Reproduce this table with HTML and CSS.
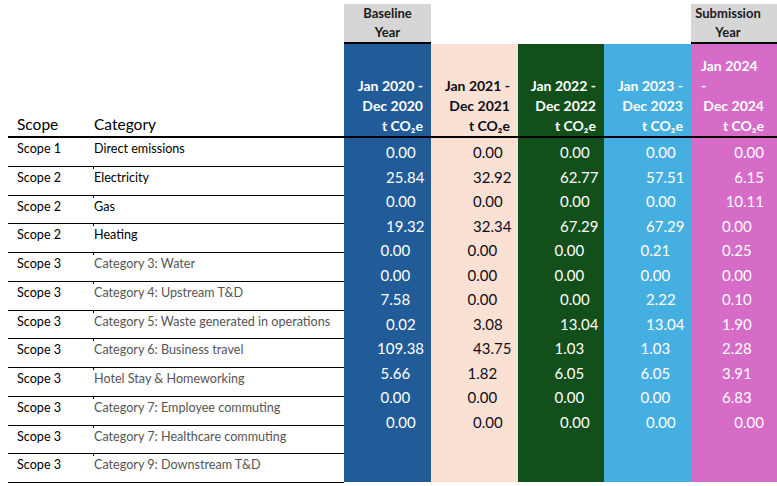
FILE: index.html
```html
<!DOCTYPE html>
<html>
<head>
<meta charset="utf-8">
<link rel="stylesheet" href="styles.css">
</head>
<body>
<div class="sheet">
  <div class="left">
    <div class="lhead">
      <div class="c-scope h">Scope</div>
      <div class="c-cat h">Category</div>
    </div>
    <div class="row first"><div class="c-scope">Scope 1</div><div class="c-cat">Direct emissions</div></div>
    <div class="row"><div class="c-scope">Scope 2</div><div class="c-cat">Electricity</div></div>
    <div class="row"><div class="c-scope">Scope 2</div><div class="c-cat">Gas</div></div>
    <div class="row"><div class="c-scope">Scope 2</div><div class="c-cat">Heating</div></div>
    <div class="row"><div class="c-scope">Scope 3</div><div class="c-cat grey">Category 3: Water</div></div>
    <div class="row"><div class="c-scope">Scope 3</div><div class="c-cat grey">Category 4: Upstream T&amp;D</div></div>
    <div class="row"><div class="c-scope">Scope 3</div><div class="c-cat grey">Category 5: Waste generated in operations</div></div>
    <div class="row"><div class="c-scope">Scope 3</div><div class="c-cat grey">Category 6: Business travel</div></div>
    <div class="row"><div class="c-scope">Scope 3</div><div class="c-cat grey">Hotel Stay &amp; Homeworking</div></div>
    <div class="row"><div class="c-scope">Scope 3</div><div class="c-cat grey">Category 7: Employee commuting</div></div>
    <div class="row"><div class="c-scope">Scope 3</div><div class="c-cat grey">Category 7: Healthcare commuting</div></div>
    <div class="row last"><div class="c-scope">Scope 3</div><div class="c-cat grey">Category 9: Downstream T&amp;D</div></div>
  </div>

  <div class="col w87">
    <div class="col-top gray">Baseline<br>Year</div>
    <div class="col-body blue">
      <div class="col-head"><div>Jan 2020 -</div><div>Dec 2020</div><div>t CO₂e</div></div>
      <div class="vals">
        <div class="a">0.00</div><div class="a">25.84</div><div class="a">0.00</div><div class="a">19.32</div>
        <div class="b">0.00</div><div class="b">0.00</div><div class="b">7.58</div><div class="a">0.02</div>
        <div class="wide">109.38</div><div class="b">5.66</div><div class="b">0.00</div><div class="a">0.00</div>
      </div>
    </div>
  </div>

  <div class="col w87">
    <div class="col-top"></div>
    <div class="col-body peach">
      <div class="col-head"><div>Jan 2021 -</div><div>Dec 2021</div><div>t CO₂e</div></div>
      <div class="vals">
        <div class="a">0.00</div><div class="a">32.92</div><div class="a">0.00</div><div class="a">32.34</div>
        <div class="b">0.00</div><div class="b">0.00</div><div class="b">0.00</div><div class="a">3.08</div>
        <div class="a">43.75</div><div class="b">1.82</div><div class="b">0.00</div><div class="a">0.00</div>
      </div>
    </div>
  </div>

  <div class="col w86">
    <div class="col-top"></div>
    <div class="col-body green">
      <div class="col-head"><div>Jan 2022 -</div><div>Dec 2022</div><div>t CO₂e</div></div>
      <div class="vals">
        <div class="a">0.00</div><div class="a">62.77</div><div class="a">0.00</div><div class="a">67.29</div>
        <div class="b">0.00</div><div class="b">0.00</div><div class="a">0.00</div><div class="a">13.04</div>
        <div class="b">1.03</div><div class="b">6.05</div><div class="b">0.00</div><div class="a">0.00</div>
      </div>
    </div>
  </div>

  <div class="col w87">
    <div class="col-top"></div>
    <div class="col-body lblue">
      <div class="col-head"><div>Jan 2023 -</div><div>Dec 2023</div><div>t CO₂e</div></div>
      <div class="vals">
        <div class="a">0.00</div><div class="a">57.51</div><div class="a">0.00</div><div class="a">67.29</div>
        <div class="b">0.21</div><div class="b">0.00</div><div class="a">2.22</div><div class="a">13.04</div>
        <div class="b">1.03</div><div class="b">6.05</div><div class="b">0.00</div><div class="a">0.00</div>
      </div>
    </div>
  </div>

  <div class="col w86">
    <div class="col-top gray sub">Submission<br>Year</div>
    <div class="col-body magenta">
      <div class="col-head"><div class="hl">Jan 2024</div><div class="hl">-</div><div>Dec 2024</div><div>t CO₂e</div></div>
      <div class="vals">
        <div class="r">0.00</div><div class="r">6.15</div><div class="r">10.11</div><div class="m">0.00</div>
        <div class="m">0.25</div><div class="m">0.00</div><div class="m">0.10</div><div class="m">1.90</div>
        <div class="m">2.28</div><div class="m">3.91</div><div class="m">6.83</div><div class="r">0.00</div>
      </div>
    </div>
  </div>
</div>
</body>
</html>
```

FILE: styles.css
```css
html, body {
  margin: 0;
  padding: 0;
  background: #ffffff;
}
body {
  font-family: Lato, "Liberation Sans", sans-serif;
  color: #000000;
}
.sheet {
  display: flex;
  width: 777px;
  padding-top: 4px;
}
.left {
  width: 344px;
  padding-left: 8px;
  box-sizing: border-box;
  display: flex;
  flex-direction: column;
}
.lhead {
  height: 132px;
  border-bottom: 2px solid #000;
  display: flex;
  align-items: flex-end;
}
.h {
  font-size: 15.5px;
  line-height: 20px;
  padding-bottom: 2px;
}
.row {
  position: relative;
  display: flex;
  height: 28.75px;
  box-sizing: border-box;
  border-bottom: 1px solid #000;
  font-size: 12.6px;
  line-height: 22px;
}
.row::after {
  content: "";
  position: absolute;
  left: 85px;
  bottom: -3px;
  width: 1px;
  height: 2px;
  background: #000;
}
.c-scope {
  width: 85px;
  padding-left: 9px;
  box-sizing: border-box;
  flex: none;
}
.c-cat {
  flex: 1;
  padding-left: 1px;
  white-space: nowrap;
}
.grey {
  color: #555555;
}

.col {
  display: flex;
  flex-direction: column;
}
.w87 { width: 87px; }
.w86 { width: 86px; }
.col-top {
  height: 40px;
  box-sizing: border-box;
}
.col-top.gray {
  background: #d6d6d6;
  border-bottom: 2px solid #000;
  text-align: center;
  font-weight: 700;
  font-size: 13px;
  line-height: 19px;
  color: #1a1a1a;
}
.col-top.sub {
  padding-right: 12px;
}
.col-body {
  height: 438px;
  display: flex;
  flex-direction: column;
  color: #ffffff;
}
.blue { background: #215c99; }
.peach { background: #fbe1d4; color: #0d0d1a; }
.green { background: #134f1a; }
.lblue { background: #46afe1; }
.magenta { background: #d76bc8; }

.col-head {
  height: 92px;
  border-bottom: 2px solid #000;
  display: flex;
  flex-direction: column;
  justify-content: flex-end;
  text-align: right;
  padding-right: 8px;
  font-weight: 700;
  font-size: 14px;
  line-height: 20px;
  white-space: nowrap;
}
.magenta .col-head {
  padding-right: 13px;
}
.col-head .hl {
  text-align: left;
  padding-left: 10px;
}
.vals {
  padding-top: 2px;
  font-size: 15px;
  line-height: 24.5px;
  white-space: nowrap;
}
.a { padding-left: 42px; }
.b { padding-left: 36.5px; }
.wide { padding-left: 33px; }
.r { text-align: right; padding-right: 13px; }
.m { padding-left: 31px; }
```
